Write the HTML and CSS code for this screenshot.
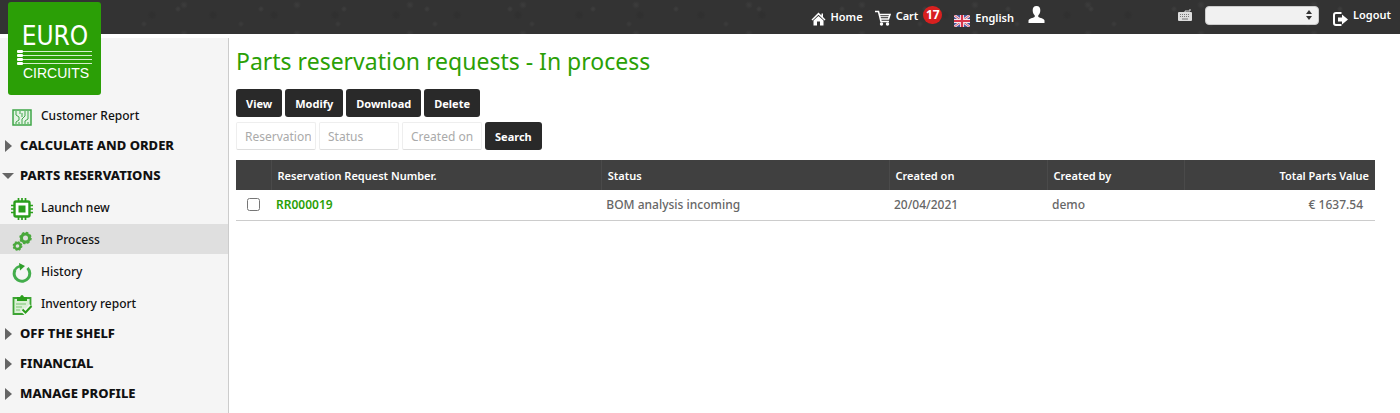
FILE: index.html
```html
<!DOCTYPE html>
<html lang="en">
<head>
    <meta charset="UTF-8">
    <meta name="viewport" content="width=device-width, initial-scale=1.0">
    <title>Parts reservation requests - In process</title>
    <link rel="stylesheet" href="styles.css">
</head>
<body>
    <header class="topbar">
        <a href="#" class="logo" aria-label="Eurocircuits">
            <svg viewBox="0 0 93 93" width="93" height="93">
                <text class="logo-euro" x="47" y="43" text-anchor="middle">EURO</text>
                <g fill="#fff">
                    <rect x="9" y="48" width="6" height="3" rx="1"/>
                    <rect x="9" y="52" width="6" height="3" rx="1"/>
                    <rect x="9" y="56" width="6" height="3" rx="1"/>
                    <rect x="9" y="60" width="6" height="3" rx="1"/>
                </g>
                <path d="M15 49.500H84M15 53.500H84M15 57.500H84M15 61.500H84" stroke="#d5efcc" stroke-width="1"/>
                <text class="logo-circuits" x="48" y="76" text-anchor="middle">CIRCUITS</text>
            </svg>
        </a>
        <nav class="topnav">
            <a href="#" class="home">
                <svg class="low" viewBox="0 0 15 14" width="15" height="14">
                    <path d="M7.500 0.500L0.500 7.500L1.500 8.500L7.500 2.800L13.500 8.500L14.500 7.500L12 5V1.500H10.500V3.500Z" fill="#fff"/>
                    <path d="M2.500 8.500L7.500 4L12.500 8.500V13.500H9V9.500H6V13.500H2.500Z" fill="#fff"/>
                </svg>
                Home
            </a>
            <a href="#" class="cart">
                <svg class="low" viewBox="0 0 16 16" width="16" height="16" fill="none" stroke="#fff">
                    <path d="M0 1.500H3.500L6 11.500H14" stroke-width="1.600"/>
                    <path d="M4.500 4.500H15L13.500 9H5.500" stroke-width="1.600"/>
                    <path d="M5 6.700H14" stroke-width="1"/>
                    <circle cx="6.500" cy="14" r="1.700" fill="#fff" stroke="none"/>
                    <circle cx="12.500" cy="14" r="1.700" fill="#fff" stroke="none"/>
                </svg>
                Cart
                <span class="badge">17</span>
            </a>
            <a href="#" class="language">
                <svg class="low" viewBox="0 0 16 12" width="16" height="12">
                    <rect width="16" height="12" fill="#4858a0"/>
                    <path d="M0 0L16 12M16 0L0 12" stroke="#f2dfe6" stroke-width="2.600"/>
                    <path d="M0 0L16 12M16 0L0 12" stroke="#d65a6c" stroke-width="1"/>
                    <path d="M8 0V12M0 6H16" stroke="#f6e8ec" stroke-width="4"/>
                    <path d="M8 0V12M0 6H16" stroke="#d8354a" stroke-width="2.200"/>
                </svg>
                English
            </a>
            <a href="#" class="user" aria-label="Account">
                <svg viewBox="0 0 17 17" width="17" height="17" fill="#fff">
                    <path d="M8.500 0C11.200 0 12.500 2 12.300 4.700C12.200 6.700 11.300 8.500 10.300 9.300V11C12 12 16 12.300 16.500 14.500V17H0.500V14.500C1 12.300 5 12 6.700 11V9.300C5.700 8.500 4.800 6.700 4.700 4.700C4.500 2 5.800 0 8.500 0Z"/>
                </svg>
            </a>
            <svg class="keyboard" viewBox="0 0 14 12" width="14" height="12">
                <path d="M7 4V2H12V0" fill="none" stroke="#ddd"/>
                <rect x="0" y="3" width="14" height="9" rx="1" fill="#ddd"/>
                <path d="M2 5.500H12M2 7.500H12" stroke="#777" stroke-dasharray="1 1"/>
                <path d="M4 10H10" stroke="#777"/>
            </svg>
            <span class="picker">
                <select aria-label="Account selection"><option></option></select>
                <svg viewBox="0 0 6 10" width="6" height="10" fill="#333">
                    <path d="M3 0L6 4H0ZM3 10L0 6H6Z"/>
                </svg>
            </span>
            <a href="#" class="logout">
                <svg class="low" viewBox="0 0 15 14" width="15" height="14">
                    <path d="M8.500 1H3Q1 1 1 3V11Q1 13 3 13H8.500" fill="none" stroke="#fff" stroke-width="2"/>
                    <path d="M5 5.500H9V2.500L15 7.500L9 12.500V9.500H5Z" fill="#fff"/>
                </svg>
                Logout
            </a>
        </nav>
    </header>

    <div class="layout">
        <aside class="sidebar">
            <ul class="menu">
                <li><a href="#" class="item">
                    <svg viewBox="0 0 20 18" width="20" height="18" fill="none" stroke="#3fa648">
                        <rect x="1" y="2" width="18" height="15" fill="#e4f3e4" stroke-width="1.500"/>
                        <path d="M4 3V7L7 9V12L4 14V16M8 3V6M10 16V11L13 8V3M7 16V14M13 16V13L16 11V3M16 16V14M10 9V5" stroke-width="1"/>
                    </svg>
                    Customer Report
                </a></li>
                <li><a href="#" class="group"><span class="arrow"></span>CALCULATE AND ORDER</a></li>
                <li><a href="#" class="group"><span class="arrow open"></span>PARTS RESERVATIONS</a>
                    <ul class="submenu">
                        <li><a href="#" class="item">
                            <svg viewBox="0 0 22 22" width="22" height="22" fill="none" stroke="#2b9f1c">
                                <path d="M7.500 0V4M11 0V4M14.500 0V4M7.500 18V22M11 18V22M14.500 18V22M0 7.500H4M0 11H4M0 14.500H4M18 7.500H22M18 11H22M18 14.500H22" stroke-width="1.700"/>
                                <rect x="3.500" y="3.500" width="15" height="15" rx="1.500" fill="#fff" stroke-width="2.400"/>
                                <rect x="7.500" y="7.500" width="7" height="7" fill="#2b9f1c" stroke="none"/>
                            </svg>
                            Launch new
                        </a></li>
                        <li><a href="#" class="item active">
                            <svg viewBox="0 0 20 20" width="20" height="20" fill="none" stroke="#4aa83c">
                                <circle cx="13.500" cy="7" r="4" stroke-width="3"/>
                                <circle cx="13.500" cy="7" r="5.500" stroke-width="1.500" stroke-dasharray="2.300 2"/>
                                <circle cx="5.500" cy="15" r="3" stroke-width="2.400"/>
                                <circle cx="5.500" cy="15" r="4.300" stroke-width="1.200" stroke-dasharray="1.800 1.600"/>
                            </svg>
                            In Process
                        </a></li>
                        <li><a href="#" class="item">
                            <svg viewBox="0 0 20 20" width="20" height="20">
                                <path d="M15.500 5A7.800 7.800 0 1 1 3 7" fill="none" stroke="#43ad4c" stroke-width="3"/>
                                <path d="M2.700 7.500Q4.500 3.500 8.500 3.200" fill="none" stroke="#43ad4c" stroke-width="2.500"/>
                                <path d="M7 0L13 3L8 7.500Z" fill="#2f9f2b"/>
                            </svg>
                            History
                        </a></li>
                        <li><a href="#" class="item">
                            <svg viewBox="0 0 20 20" width="20" height="20">
                                <path d="M1.500 3H18.500V11.500L13 17V19H1.500Z" fill="#d9f0d4" stroke="#3da434" stroke-width="1.800"/>
                                <path d="M5 2H8Q10 -2 12 2H15V6H5Z" fill="#2b9f1c"/>
                                <path d="M4 9H14M4 12H10M4 15H8" stroke="#79c36e" stroke-width="1.200"/>
                                <path d="M10.500 14.500L13.500 17.500L19.500 11" fill="none" stroke="#f5f5f5" stroke-width="5"/>
                                <path d="M10.500 14.500L13.500 17.500L19.500 11" fill="none" stroke="#2b9f1c" stroke-width="2"/>
                            </svg>
                            Inventory report
                        </a></li>
                    </ul>
                </li>
                <li><a href="#" class="group"><span class="arrow"></span>OFF THE SHELF</a></li>
                <li><a href="#" class="group"><span class="arrow"></span>FINANCIAL</a></li>
                <li><a href="#" class="group"><span class="arrow"></span>MANAGE PROFILE</a></li>
            </ul>
        </aside>

        <main class="content">
            <h1>Parts reservation requests - In process</h1>
            <div class="actions">
                <button type="button">View</button>
                <button type="button">Modify</button>
                <button type="button">Download</button>
                <button type="button">Delete</button>
            </div>
            <form class="search">
                <input type="text" placeholder="Reservation" aria-label="Reservation">
                <input type="text" placeholder="Status" aria-label="Status">
                <input type="text" placeholder="Created on" aria-label="Created on">
                <button type="button">Search</button>
            </form>
            <table class="requests">
                <thead>
                    <tr>
                        <th class="col-check"></th>
                        <th class="col-number">Reservation Request Number.</th>
                        <th>Status</th>
                        <th class="col-date">Created on</th>
                        <th class="col-user">Created by</th>
                        <th class="col-value">Total Parts Value</th>
                    </tr>
                </thead>
                <tbody>
                    <tr>
                        <td class="col-check"><input type="checkbox" aria-label="Select RR000019"></td>
                        <td><a href="#">RR000019</a></td>
                        <td>BOM analysis incoming</td>
                        <td>20/04/2021</td>
                        <td>demo</td>
                        <td class="col-value">€ 1637.54</td>
                    </tr>
                </tbody>
            </table>
        </main>
    </div>
</body>
</html>
```
FILE: styles.css
```css
* {
    box-sizing: border-box;
}
body {
    margin: 0;
    min-height: 100vh;
    display: flex;
    flex-direction: column;
    background-color: #fff;
    font-family: "Noto Sans", "Open Sans", sans-serif;
    font-size: 12px;
    font-weight: 500;
    color: #111;
}
a {
    color: inherit;
    text-decoration: none;
}
ul {
    list-style: none;
    margin: 0;
    padding: 0;
}

/* Top bar */
.topbar {
    position: relative;
    height: 34px;
    background-color: #333;
    background-image:
        radial-gradient(circle at 12px 9px, #3c3c3c 1px, transparent 3px),
        radial-gradient(circle at 47px 24px, #3a3a3a 1px, transparent 3px),
        radial-gradient(circle at 71px 5px, #3b3b3b 1px, transparent 4px),
        radial-gradient(circle at 30px 15px, #303030 2px, transparent 5px);
    background-size: 83px 31px, 97px 34px, 113px 29px, 61px 34px;
}
.logo {
    position: absolute;
    left: 8px;
    top: 2px;
    z-index: 1;
    height: 93px;
    border-radius: 3px;
    background-color: #2b9f06;
}
.logo text {
    fill: #fff;
}
.logo-euro {
    font-family: "DejaVu Sans Condensed", "DejaVu Sans", sans-serif;
    font-size: 26px;
    font-weight: 400;
}
.logo-circuits {
    font-family: "Liberation Sans", sans-serif;
    font-size: 14px;
    font-weight: 400;
}
.topnav {
    display: flex;
    justify-content: flex-end;
    height: 32px;
    padding-right: 9px;
    color: #fff;
    font-size: 11px;
    font-weight: 600;
}
.topnav a {
    display: flex;
    align-items: center;
    gap: 5px;
}
.low {
    margin-top: 6px;
}
.home {
    margin-right: 12px;
}
.cart {
    height: 30px;
    margin-right: 12px;
}
.badge {
    width: 19px;
    height: 18px;
    border-radius: 9px;
    background-color: #d8201f;
    font-size: 12px;
    font-weight: 700;
    line-height: 18px;
    text-align: center;
}
.language {
    height: 35px;
    margin-right: 14px;
}
.user {
    height: 28px;
    margin-right: 133px;
}
.keyboard {
    margin-top: 9px;
    margin-right: 13px;
}
.picker {
    position: relative;
    margin-top: 6px;
    margin-right: 14px;
}
.picker select {
    display: block;
    appearance: none;
    width: 114px;
    height: 19px;
    border: 1px solid #ccc;
    border-radius: 4px;
    background-color: #f1f1f1;
}
.picker svg {
    position: absolute;
    right: 7px;
    top: 4px;
    pointer-events: none;
}
.logout {
    height: 28px;
}
.logout .low {
    margin-top: 9px;
}

.layout {
    flex: 1;
    display: flex;
    padding-top: 4px;
}

/* Sidebar */
.sidebar {
    width: 229px;
    flex-shrink: 0;
    padding-top: 62px;
    background-color: #f5f5f5;
    border-right: 1px solid #ccc;
}
.group,
.item {
    display: flex;
    align-items: center;
    height: 30px;
}
.group {
    padding-left: 5px;
    font-size: 13px;
    font-weight: 800;
}
.arrow {
    width: 15px;
    margin-top: 2px;
}
.arrow::before {
    content: "";
    display: block;
    width: 0;
    border: 6px solid transparent;
    border-left: 7px solid #666;
    border-right: 0;
}
.arrow.open {
    margin-left: -3px;
    width: 18px;
}
.arrow.open::before {
    border: 6px solid transparent;
    border-top: 6px solid #666;
    border-bottom: 0;
}
.item {
    padding-left: 41px;
}
.item svg {
    width: 22px;
    margin-left: -30px;
    margin-right: 8px;
    margin-top: 4px;
}
.submenu .item {
    margin-top: 2px;
}
.item.active {
    background-color: #dfdfdf;
}

/* Main content */
.content {
    flex: 1;
    min-width: 0;
    padding: 7px 25px 0 7px;
}
h1 {
    margin: 0 0 11px;
    font-size: 23px;
    font-weight: 400;
    line-height: 33px;
    color: #2b9f06;
}
.actions,
.search {
    display: flex;
    gap: 3px;
}
.search {
    margin: 5px 0 10px;
}
button {
    height: 28px;
    padding: 0 10px;
    border: 0;
    border-radius: 3px;
    background-color: #292929;
    color: #fff;
    font-family: inherit;
    font-size: 11px;
    font-weight: 700;
    cursor: pointer;
}
.search input {
    width: 80px;
    height: 28px;
    padding: 0 4px 0 8px;
    border: 1px solid #eee;
    border-bottom-color: #ddd;
    border-radius: 2px;
    background-color: #fff;
    font-family: inherit;
    font-size: 12px;
}
.search input::placeholder {
    color: #aaa;
}
.requests {
    width: 100%;
    table-layout: fixed;
    border-collapse: collapse;
}
.requests th {
    height: 30px;
    padding: 0 6px;
    border-left: 1px solid #4a4a4a;
    background-color: #404040;
    color: #fff;
    font-size: 11px;
    font-weight: 600;
    text-align: left;
}
.requests td {
    height: 30px;
    padding: 0 5px;
    border-bottom: 1px solid #ccc;
    color: #666;
}
.requests td a {
    color: #2b9f06;
    font-weight: 600;
}
.requests .col-check {
    width: 35px;
    border-left: 0;
    text-align: center;
}
.col-check input {
    display: block;
    width: 13px;
    height: 13px;
    margin: 0 auto;
}
.col-number {
    width: 29%;
}
.col-date {
    width: 158px;
}
.col-user {
    width: 137px;
}
.requests .col-value {
    width: 191px;
    text-align: right;
}
.requests td.col-value {
    padding-right: 12px;
}
```
